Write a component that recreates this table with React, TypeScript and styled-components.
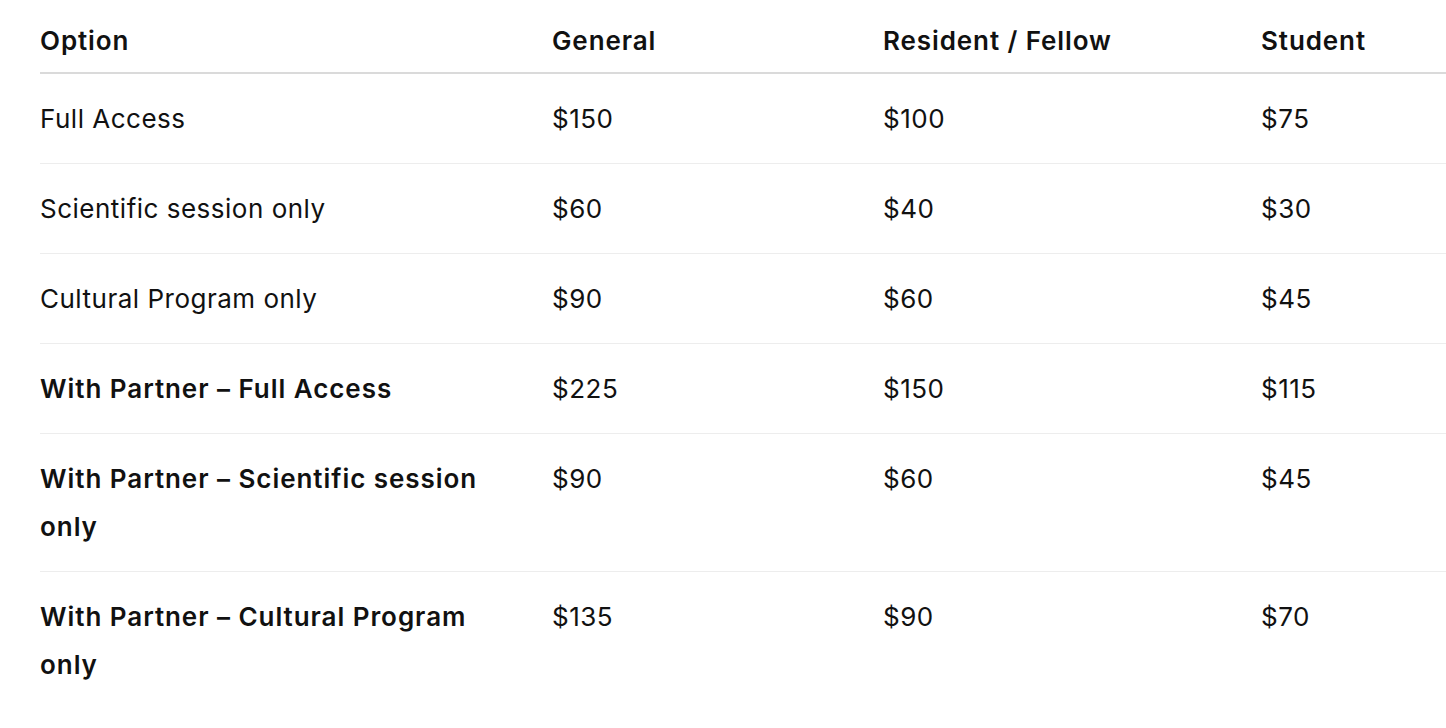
import React from "react";
import styled, { createGlobalStyle } from "styled-components";

const Global = createGlobalStyle`
  html, body { margin: 0; padding: 0; background: #ffffff; }
  body { font-family: Inter, "Noto Sans", sans-serif; color: #111111; }
`;

const Page = styled.div`
  padding: 0 0 0 40px;
`;

const Table = styled.table`
  width: 100%;
  border-collapse: collapse;
  table-layout: fixed;
  font-size: 26px;
  line-height: 48px;
`;

const Col = styled.col<{ $w?: number }>`
  width: ${(p) => (p.$w ? `${p.$w}px` : "auto")};
`;

const HeadCell = styled.th`
  text-align: left;
  font-weight: 600;
  letter-spacing: 0.9px;
  padding: 17px 24px 7px 0;
  border-bottom: 2px solid #dadada;
  vertical-align: top;
`;

const Row = styled.tr`
  border-bottom: 1px solid #ededed;
  &:last-child { border-bottom: none; }
`;

const Cell = styled.td<{ $bold?: boolean }>`
  padding: 21px 34px 20px 0;
  font-weight: ${(p) => (p.$bold ? 600 : 400)};
  letter-spacing: ${(p) => (p.$bold ? "0.95px" : "0.5px")};
  vertical-align: top;
`;

const rows: { name: string; bold?: boolean; prices: string[] }[] = [
  { name: "Full Access", prices: ["$150", "$100", "$75"] },
  { name: "Scientific session only", prices: ["$60", "$40", "$30"] },
  { name: "Cultural Program only", prices: ["$90", "$60", "$45"] },
  { name: "With Partner – Full Access", bold: true, prices: ["$225", "$150", "$115"] },
  { name: "With Partner – Scientific session only", bold: true, prices: ["$90", "$60", "$45"] },
  { name: "With Partner – Cultural Program only", bold: true, prices: ["$135", "$90", "$70"] },
];

export default function App() {
  return (
    <Page>
      <Global />
      <Table>
        <colgroup>
          <Col $w={512} />
          <Col $w={331} />
          <Col $w={378} />
          <Col />
        </colgroup>
        <thead>
          <tr>
            <HeadCell>Option</HeadCell>
            <HeadCell>General</HeadCell>
            <HeadCell>Resident / Fellow</HeadCell>
            <HeadCell>Student</HeadCell>
          </tr>
        </thead>
        <tbody>
          {rows.map((r) => (
            <Row key={r.name}>
              <Cell $bold={r.bold}>{r.name}</Cell>
              {r.prices.map((p, i) => (
                <Cell key={i}>{p}</Cell>
              ))}
            </Row>
          ))}
        </tbody>
      </Table>
    </Page>
  );
}
